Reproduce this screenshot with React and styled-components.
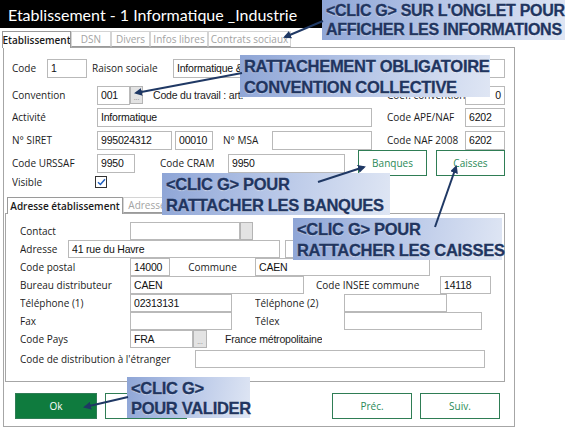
import React from 'react'
import styled, { createGlobalStyle } from 'styled-components'

// ---------------------------------------------Styled---------------------------------------------

const GlobalStyle = createGlobalStyle`
  body {
    margin: 0;
    background: #fff;
    font-family: 'Open Sans', 'Noto Sans', sans-serif;
  }
`

const Screen = styled.div`
  position: relative;
  width: 576px;
  height: 430px;
  overflow: hidden;
  background: #fff;
`

const Window = styled.div`
  width: 515px;
  display: flex;
  flex-direction: column;
`

const TitleBar = styled.div`
  height: 28px;
  background: #000;
  color: #fff;
  font-family: Lato, 'Open Sans', sans-serif;
  font-size: 16px;
  display: flex;
  align-items: center;
  padding-left: 8px;
  white-space: nowrap;
`

const TabStrip = styled.div`
  display: flex;
  padding: 3px 0 0 ${p => p.pl || 2}px;
  height: 16px;
  position: relative;
  z-index: 1;
`

const Tab = styled.div`
  box-sizing: border-box;
  width: ${p => p.w}px;
  height: ${p => (p.active ? 17 : 16)}px;
  border: 1px solid ${p => (p.active ? '#9a9a9a' : '#d4d4d4')};
  border-bottom: ${p => (p.active ? 'none' : '1px solid #9a9a9a')};
  background: #fff;
  color: ${p => (p.active ? '#1a1a1a' : '#a3a3a3')};
  font-size: 10px;
  font-weight: ${p => (p.active ? 600 : 400)};
  display: flex;
  align-items: center;
  justify-content: center;
  white-space: nowrap;
  overflow: hidden;
`

const Panel = styled.div`
  box-sizing: border-box;
  margin-left: 3px;
  width: 512px;
  height: 380px;
  border: 1px solid #a6a6a6;
  padding-top: 10px;
`

const Row = styled.div`
  display: flex;
  align-items: center;
  height: ${p => p.h || 20}px;
  margin-top: ${p => p.mt || 0}px;
  padding-left: ${p => (p.pl === undefined ? 8 : p.pl)}px;
`

const Label = styled.div`
  flex: none;
  width: ${p => (p.w ? `${p.w}px` : 'auto')};
  margin-left: ${p => p.ml || 0}px;
  font-size: 10px;
  color: #1c1c1c;
  text-align: ${p => (p.center ? 'center' : 'left')};
  white-space: nowrap;
  overflow: hidden;
`

const Plain = styled(Label)`
  font-family: 'Liberation Sans', Arial, sans-serif;
  font-size: 10.5px;
  letter-spacing: -0.2px;
`

const Field = styled.div`
  box-sizing: border-box;
  flex: none;
  width: ${p => p.w}px;
  height: ${p => p.fh || 19}px;
  margin-left: ${p => p.ml || 0}px;
  border: 1px solid #b9b9b9;
  background: #fff;
  font-family: 'Liberation Sans', Arial, sans-serif;
  font-size: 10.5px;
  letter-spacing: -0.2px;
  color: #111;
  display: flex;
  align-items: center;
  justify-content: ${p => (p.right ? 'flex-end' : 'flex-start')};
  padding: 0 3px;
  white-space: nowrap;
  overflow: hidden;
`

const DotsButton = styled.div`
  box-sizing: border-box;
  flex: none;
  width: ${p => p.w || 13}px;
  height: ${p => p.fh || 18}px;
  background: #e3e3e3;
  border: 1px solid #b4b4b4;
  color: #8a8a8a;
  font-size: 7px;
  display: flex;
  align-items: flex-end;
  justify-content: center;
  line-height: 10px;
`

const Check = styled.div`
  box-sizing: border-box;
  width: 12px;
  height: 12px;
  border: 1px solid #333;
  background: #fff;
  display: flex;
  align-items: center;
  justify-content: center;
`

const GreenButton = styled.div`
  box-sizing: border-box;
  flex: none;
  width: ${p => p.w}px;
  height: ${p => p.bh || 26}px;
  margin-left: ${p => p.ml || 0}px;
  border: 1px solid #2f7d55;
  background: ${p => (p.filled ? '#0f7b3e' : '#fff')};
  color: ${p => (p.filled ? '#fff' : '#2b8a57')};
  font-size: 10px;
  display: flex;
  align-items: center;
  justify-content: center;
`

const SubSection = styled.div`
  margin: 6px 0 0 1px;
  width: 500px;
`

const SubPanel = styled.div`
  box-sizing: border-box;
  width: 500px;
  height: 169px;
  border: 1px solid #a6a6a6;
  padding-top: 8px;
`

const ButtonBar = styled.div`
  display: flex;
  align-items: center;
  margin-top: 11px;
  padding-left: 11px;
`

const Callout = styled.div`
  position: absolute;
  left: ${p => p.x}px;
  top: ${p => p.y}px;
  width: ${p => p.w}px;
  height: ${p => p.h}px;
  box-sizing: border-box;
  padding: ${p => p.pt || 1}px 0 0 4px;
  background: linear-gradient(100deg, #8ea5d6 0%, #b4c4e6 45%, #dfe6f4 100%);
  color: #213560;
  font-family: 'Liberation Sans', Arial, sans-serif;
  font-weight: 700;
  font-size: ${p => p.fs || 16.5}px;
  line-height: ${p => p.lh || 20}px;
  letter-spacing: -0.3px;
  white-space: nowrap;
  -webkit-text-stroke: 0.3px #213560;
  text-shadow: 0 1px 1px rgba(255, 255, 255, 0.45);
  z-index: 5;
`

const ArrowLayer = styled.svg`
  position: absolute;
  left: 0;
  top: 0;
  width: 576px;
  height: 430px;
  pointer-events: none;
  z-index: 6;
`

// -------------------------------------------Structure---------------------------------------------

const arrows = [
  [323, 21, 285, 37],
  [242, 73, 136, 93],
  [318, 182, 364, 167],
  [435, 227, 456, 167],
  [128, 397, 85, 407]
]

export default function App() {
  return (
    <Screen>
      <GlobalStyle />
      <Window>
        <TitleBar>Etablissement - 1 Informatique _Industrie</TitleBar>
        <TabStrip>
          <Tab active w={69}>Etablissement</Tab>
          <Tab w={40}>DSN</Tab>
          <Tab w={39}>Divers</Tab>
          <Tab w={58}>Infos libres</Tab>
          <Tab w={83}>Contrats sociaux</Tab>
        </TabStrip>
        <Panel>
          <Row>
            <Label w={35}>Code</Label>
            <Field w={40}>1</Field>
            <Label w={81} ml={5}>Raison sociale</Label>
            <Field w={332}>Informatique &amp; Industrie</Field>
          </Row>
          <Row mt={7}>
            <Label w={85}>Convention</Label>
            <Field w={33}>001</Field>
            <DotsButton>...</DotsButton>
            <Plain w={234} ml={10}>Code du travail : art.</Plain>
            <Label w={78}>Coef. convention</Label>
            <Field w={40} right>0</Field>
          </Row>
          <Row mt={2}>
            <Label w={85}>Activité</Label>
            <Field w={275}>Informatique</Field>
            <Label w={78} ml={15}>Code APE/NAF</Label>
            <Field w={40}>6202</Field>
          </Row>
          <Row mt={3}>
            <Label w={85}>N° SIRET</Label>
            <Field w={75}>995024312</Field>
            <Field w={38} ml={3}>00010</Field>
            <Label w={49} ml={10}>N° MSA</Label>
            <Field w={100} />
            <Label w={78} ml={15}>Code NAF 2008</Label>
            <Field w={40}>6202</Field>
          </Row>
          <Row mt={1} h={24}>
            <Label w={85}>Code URSSAF</Label>
            <Field w={38}>9950</Field>
            <Label w={68} ml={25}>Code CRAM</Label>
            <Field w={117}>9950</Field>
            <GreenButton w={69} ml={13}>Banques</GreenButton>
            <GreenButton w={69} ml={9}>Caisses</GreenButton>
          </Row>
          <Row h={13}>
            <Label w={83}>Visible</Label>
            <Check>
              <svg width="9" height="8" viewBox="0 0 9 8">
                <path d="M1 4.2 L3.4 6.5 L8 1.2" fill="none" stroke="#1f5fbf" strokeWidth="1.5" />
              </svg>
            </Check>
          </Row>

          <SubSection>
            <TabStrip pl={0}>
              <Tab active w={116}>Adresse établissement</Tab>
              <Tab w={48}>Adresse</Tab>
            </TabStrip>
            <SubPanel>
              <Row h={18} pl={14}>
                <Label w={110}>Contact</Label>
                <Field w={110} fh={18} />
                <DotsButton />
                <GreenButton w={100} bh={20} ml={144} />
              </Row>
              <Row h={18} pl={14}>
                <Label w={48}>Adresse</Label>
                <Field w={212} fh={18}>41 rue du Havre</Field>
                <Field w={145} fh={18} ml={5} />
              </Row>
              <Row h={18} pl={14}>
                <Label w={110}>Code postal</Label>
                <Field w={40} fh={18}>14000</Field>
                <Label w={85} center>Commune</Label>
                <Field w={175} fh={18}>CAEN</Field>
              </Row>
              <Row h={18} pl={14}>
                <Label w={110}>Bureau distributeur</Label>
                <Field w={174} fh={18}>CAEN</Field>
                <Label w={124} ml={12}>Code INSEE commune</Label>
                <Field w={51} fh={18}>14118</Field>
              </Row>
              <Row h={18} pl={14}>
                <Label w={110}>Téléphone (1)</Label>
                <Field w={102} fh={18}>02313131</Field>
                <Label w={89} ml={23}>Téléphone (2)</Label>
                <Field w={103} fh={18} />
              </Row>
              <Row h={18} pl={14}>
                <Label w={110}>Fax</Label>
                <Field w={102} fh={18} />
                <Label w={89} ml={23}>Télex</Label>
                <Field w={138} fh={18} />
              </Row>
              <Row h={18} pl={14}>
                <Label w={110}>Code Pays</Label>
                <Field w={63} fh={18}>FRA</Field>
                <DotsButton w={14}>...</DotsButton>
                <Plain ml={18}>France métropolitaine</Plain>
              </Row>
              <Row h={18} mt={2} pl={14}>
                <Label w={175}>Code de distribution à l'étranger</Label>
                <Field w={290} fh={18} />
              </Row>
            </SubPanel>
          </SubSection>

          <ButtonBar>
            <GreenButton w={82} filled>Ok</GreenButton>
            <GreenButton w={82} ml={8} />
            <GreenButton w={80} ml={145}>Préc.</GreenButton>
            <GreenButton w={80} ml={8}>Suiv.</GreenButton>
          </ButtonBar>
        </Panel>
      </Window>

      <Callout x={322} y={0} w={243} h={40} lh={19} fs={16}>
        &lt;CLIC G&gt; SUR L'ONGLET POUR<br />AFFICHER LES INFORMATIONS
      </Callout>
      <Callout x={240} y={55} w={250} h={42} lh={21}>
        RATTACHEMENT OBLIGATOIRE<br />CONVENTION COLLECTIVE
      </Callout>
      <Callout x={162} y={173} w={228} h={42} lh={21}>
        &lt;CLIC G&gt; POUR<br />RATTACHER LES BANQUES
      </Callout>
      <Callout x={293} y={218} w={209} h={42} lh={21}>
        &lt;CLIC G&gt; POUR<br />RATTACHER LES CAISSES
      </Callout>
      <Callout x={127} y={377} w={123} h={41} lh={20}>
        &lt;CLIC G&gt;<br />POUR VALIDER
      </Callout>

      <ArrowLayer viewBox="0 0 576 430">
        <defs>
          <marker id="head" markerWidth="8" markerHeight="8" refX="6" refY="4" orient="auto" markerUnits="userSpaceOnUse">
            <path d="M0 0 L8 4 L0 8 Z" fill="#1f3864" />
          </marker>
        </defs>
        {arrows.map(([x1, y1, x2, y2], i) => (
          <line key={i} x1={x1} y1={y1} x2={x2} y2={y2} stroke="#1f3864" strokeWidth="2" markerEnd="url(#head)" />
        ))}
      </ArrowLayer>
    </Screen>
  )
}
